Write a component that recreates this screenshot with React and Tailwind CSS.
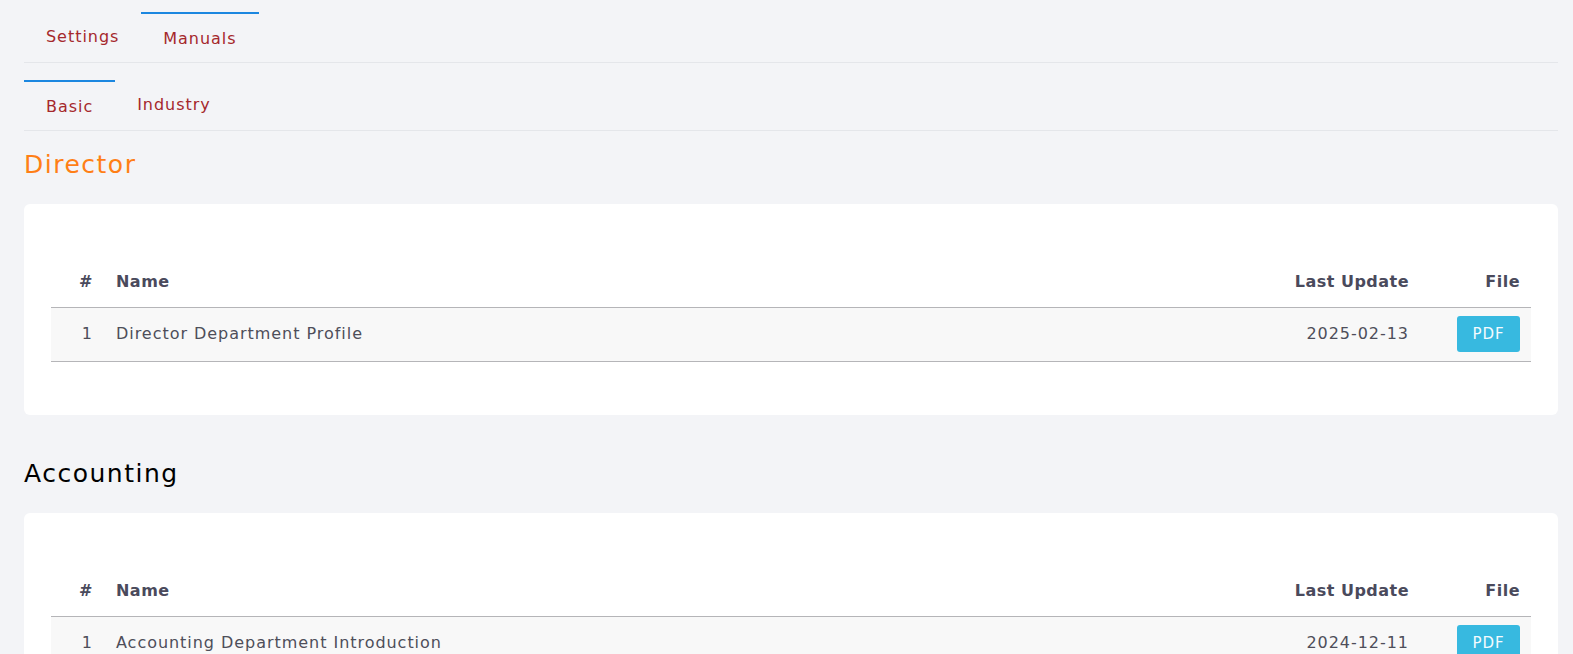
import React from "react";

const sections = [
  {
    title: "Director",
    accent: true,
    rows: [{ id: 1, name: "Director Department Profile", updated: "2025-02-13" }],
  },
  {
    title: "Accounting",
    accent: false,
    rows: [{ id: 1, name: "Accounting Department Introduction", updated: "2024-12-11" }],
  },
];

function Tabs({ items, active }) {
  return (
    <ul className="flex items-start border-b border-[#e4e6ea]">
      {items.map((t) => (
        <li
          key={t}
          className={
            "px-[22px] pt-[14px] pb-[12px] text-[16px] leading-[22px] tracking-[0.06em] text-[#a5282c] cursor-pointer " +
            (t === active ? "border-t-2 border-[#1b87e0]" : "")
          }
        >
          {t}
        </li>
      ))}
    </ul>
  );
}

function ManualTable({ rows }) {
  return (
    <div className="bg-white rounded-md p-[27px]">
      <table className="w-full mt-[23px] mb-[26px] text-[16px] leading-[22px] border-collapse">
        <thead>
          <tr className="border-b border-[#b5b5b8] text-[#4a4a5c] tracking-[0.03em]">
            <th className="w-[65px] pt-[17px] pb-[14px] pr-[23px] text-right font-bold">#</th>
            <th className="pt-[17px] pb-[14px] text-left font-bold">Name</th>
            <th className="pt-[17px] pb-[14px] pr-[11px] text-right font-bold">Last Update</th>
            <th className="w-[111px] pt-[17px] pb-[14px] pr-[11px] text-right font-bold">File</th>
          </tr>
        </thead>
        <tbody>
          {rows.map((r) => (
            <tr key={r.id} className="bg-[#f8f8f8] border-b border-[#b5b5b8] text-[#4e4e5a] tracking-[0.06em]">
              <td className="pt-[8px] pb-[9px] pr-[23px] text-right">{r.id}</td>
              <td className="pt-[8px] pb-[9px]">{r.name}</td>
              <td className="pt-[8px] pb-[9px] pr-[11px] text-right">{r.updated}</td>
              <td className="pt-[8px] pb-[9px] pr-[11px] text-right">
                <button className="h-[36px] w-[63px] rounded-[3px] bg-[#37b9e0] text-[#f4fbfe] text-[15px] tracking-[0.06em]">
                  PDF
                </button>
              </td>
            </tr>
          ))}
        </tbody>
      </table>
    </div>
  );
}

export default function App() {
  return (
    <div className="min-h-screen bg-[#f3f4f7] pl-6 pr-[15px] pt-3 pb-10 font-['DejaVu_Sans',sans-serif]">
      <Tabs items={["Settings", "Manuals"]} active="Manuals" />
      <div className="mt-[17px]">
        <Tabs items={["Basic", "Industry"]} active="Basic" />
      </div>
      {sections.map((s, i) => (
        <section key={s.title} className={i === 0 ? "mt-[18px]" : "mt-[43px]"}>
          <h2
            className={
              "text-[25px] leading-8 tracking-[0.06em] mb-[23px] " +
              (s.accent ? "text-[#ff7f16]" : "text-black")
            }
          >
            {s.title}
          </h2>
          <ManualTable rows={s.rows} />
        </section>
      ))}
    </div>
  );
}
